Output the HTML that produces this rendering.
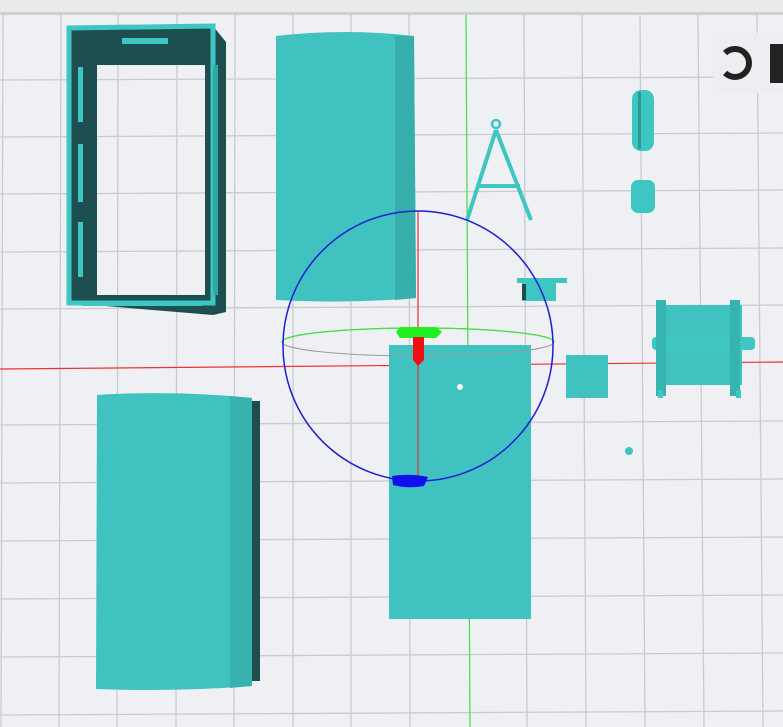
<!DOCTYPE html><html><head><style>html,body{margin:0;padding:0;background:#eef0f3}svg{display:block}</style></head><body>
<svg width="783" height="727" viewBox="0 0 783 727" xmlns="http://www.w3.org/2000/svg">
<rect width="783" height="727" fill="#eef0f3"/>
<rect width="783" height="13" fill="#e9eaec"/>
<rect y="12" width="783" height="3" fill="#cfd0d2"/>
<g stroke="#c9cbce" stroke-width="1.3">
<line x1="3" y1="15" x2="1" y2="727"/><line x1="61" y1="15" x2="59" y2="727"/><line x1="118" y1="15" x2="117" y2="727"/>
<line x1="177" y1="15" x2="176" y2="727"/><line x1="235" y1="15" x2="234" y2="727"/><line x1="293" y1="15" x2="293" y2="727"/>
<line x1="351" y1="15" x2="351" y2="727"/><line x1="409" y1="15" x2="410" y2="727"/><line x1="524" y1="15" x2="527" y2="727"/>
<line x1="582" y1="15" x2="586" y2="727"/><line x1="640" y1="15" x2="645" y2="727"/><line x1="698" y1="15" x2="704" y2="727"/><line x1="757" y1="15" x2="763" y2="727"/>
<line x1="0" y1="80" x2="783" y2="77"/><line x1="0" y1="137" x2="783" y2="133"/><line x1="0" y1="194" x2="783" y2="190"/>
<line x1="0" y1="252" x2="783" y2="248"/><line x1="0" y1="309" x2="783" y2="305"/><line x1="0" y1="425" x2="783" y2="421"/>
<line x1="0" y1="483" x2="783" y2="479"/><line x1="0" y1="541" x2="783" y2="537"/><line x1="0" y1="599" x2="783" y2="595"/>
<line x1="0" y1="657" x2="783" y2="653"/><line x1="0" y1="715" x2="783" y2="711"/>
</g>
<line x1="0" y1="369" x2="783" y2="362" stroke="#f03030" stroke-width="1.2"/>
<line x1="466" y1="15" x2="470" y2="727" stroke="#44dd44" stroke-width="1.2"/>
<path fill-rule="evenodd" d="M69 28 L213 26 L226 42 L226 312 L213 315 L69 303 Z M97 65 L205 65 L205 295 L97 295 Z" fill="#1d4e50"/>
<path d="M69 28 L213 26 L213 303 L69 303 Z" fill="none" stroke="#3ec6c2" stroke-width="5"/>
<rect x="122" y="38" width="46" height="6" fill="#3ec6c2"/>
<rect x="78" y="67" width="5" height="55" fill="#3ec6c2"/><rect x="78" y="144" width="5" height="58" fill="#3ec6c2"/><rect x="78" y="222" width="5" height="55" fill="#3ec6c2"/>
<rect x="213" y="65" width="5" height="230" fill="#2fa8a5"/>
<rect x="82" y="302" width="120" height="4" fill="#3ec6c2"/>
<path d="M276 36 Q345 28 414 36 L416 298 Q345 304 276 300 Z" fill="#40c3c0"/>
<path d="M395 36 L414 36 L416 298 L395 300 Z" fill="#36aeab"/>
<path d="M97 395 Q175 390 252 398 L252 686 Q175 692 96 689 Z" fill="#40c3c0"/>
<path d="M230 396 L252 398 L252 686 L230 688 Z" fill="#38b2af"/>
<rect x="252" y="401" width="8" height="280" fill="#1d4e50"/>
<rect x="389" y="345" width="142" height="274" fill="#40c3c0"/>
<circle cx="460" cy="387" r="3" fill="#fff"/>
<g stroke="#3ec6c2" stroke-width="4" fill="none">
<circle cx="496" cy="124" r="4" stroke-width="2.5"/>
<line x1="496" y1="130" x2="467" y2="220"/><line x1="496" y1="130" x2="531" y2="220"/><line x1="478" y1="186" x2="520" y2="186"/>
</g>
<rect x="517" y="278" width="50" height="5" fill="#3ec6c2"/><rect x="522" y="283" width="34" height="18" fill="#3ec6c2"/><rect x="522" y="284" width="4" height="16" fill="#1d4e50"/>
<rect x="566" y="355" width="42" height="43" fill="#40c3c0"/>
<rect x="632" y="90" width="22" height="61" rx="9" fill="#3ec6c2"/><rect x="638" y="92" width="3" height="57" fill="#2a9a97"/>
<rect x="631" y="180" width="24" height="33" rx="7" fill="#3ec6c2"/>
<circle cx="629" cy="451" r="4" fill="#3ec6c2"/>
<rect x="656" y="305" width="86" height="80" fill="#40c3c0"/>
<rect x="652" y="337" width="103" height="13" rx="4" fill="#3ec6c2"/>
<rect x="656" y="300" width="10" height="96" fill="#36b4b0"/><rect x="730" y="300" width="10" height="96" fill="#36b4b0"/>
<rect x="658" y="390" width="5" height="8" fill="#3ec6c2"/><rect x="736" y="390" width="5" height="8" fill="#3ec6c2"/>
<ellipse cx="418" cy="342" rx="136" ry="14" fill="none" stroke="#9a9a9a" stroke-width="1"/>
<path d="M282 342 A136 14 0 0 1 554 342" fill="none" stroke="#44dd44" stroke-width="1.3"/>
<line x1="418" y1="211" x2="418" y2="480" stroke="#e03030" stroke-width="1.2"/>
<circle cx="418" cy="346" r="135" fill="none" stroke="#1d1dd6" stroke-width="1.5"/>
<path d="M400 327 L436 327 L442 332 L436 338 L400 338 L396 332 Z" fill="#22ee22"/>
<path d="M413 337 L424 337 L424 360 L418 366 L413 360 Z" fill="#ee1111"/>
<path d="M392 476 Q410 473 428 477 L424 486 Q408 489 393 485 Z" fill="#1010ee"/>
<rect x="713" y="33" width="70" height="60" fill="#eceef1"/>
<path d="M725.1 53.1 A14 14 0 1 1 725.1 72.9" fill="none" stroke="#222" stroke-width="6"/>
<rect x="770" y="44" width="13" height="39" fill="#222"/>
</svg>
</body></html>
